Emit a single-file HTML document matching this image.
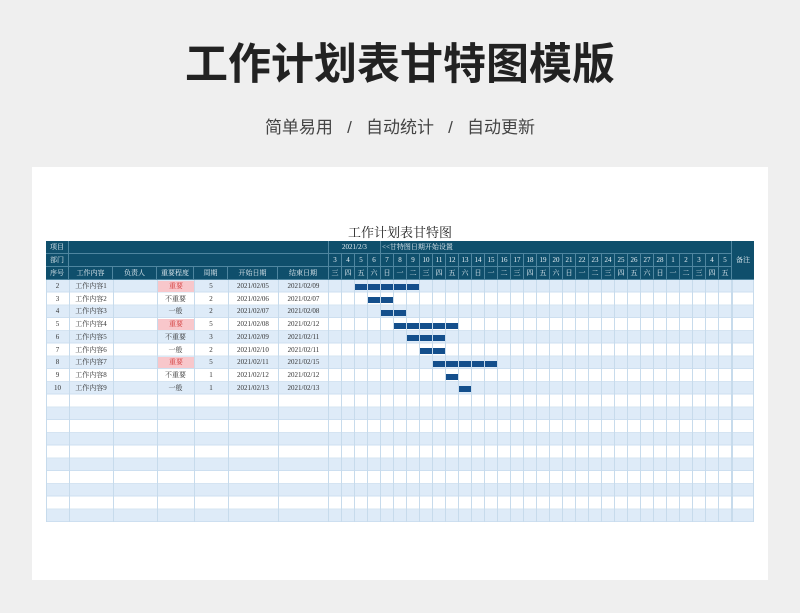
<!DOCTYPE html>
<html><head><meta charset="utf-8">
<style>
*{margin:0;padding:0;box-sizing:border-box}
body{width:800px;height:613px;background:#efefef;position:relative;overflow:hidden;font-family:"Liberation Serif","Noto Serif CJK SC",serif}
.h1{position:absolute;top:30px;left:0;width:800px;text-align:center;font:bold 43px "Liberation Sans","Noto Sans CJK SC",sans-serif;color:#222;letter-spacing:0}
.sub{position:absolute;top:113px;left:0;width:800px;text-align:center;font:17px "Liberation Sans","Noto Sans CJK SC",sans-serif;color:#444}
.card{position:absolute;left:32px;top:167px;width:736px;height:413px;background:#fff}
.t{position:absolute;top:222px;left:0;width:800px;text-align:center;font-size:13px;color:#222}
.a{position:absolute}
.hd{position:absolute;left:46px;top:241px;width:708px;height:39px;background:#0f4f6c}
.c{position:absolute;font-size:7px;text-align:center;line-height:13px;white-space:nowrap;overflow:hidden}
.hc{color:#e8f0f5;border-right:1px solid #4f86a0;border-bottom:1px solid #4f86a0}
.body{position:absolute;left:46px;top:280px;width:708px;height:242px;background:repeating-linear-gradient(to bottom,#deebf8 0,#deebf8 11.7px,#cddff0 11.7px,#cddff0 12.74px,#fff 12.74px,#fff 24.5px,#d5e4f2 24.5px,#d5e4f2 25.48px)}
.vl{position:absolute;top:280px;height:242px;width:1px;background:#c7dbec}
.gv{position:absolute;left:329px;top:280px;width:403px;height:242px;background:repeating-linear-gradient(to right,transparent 0,transparent 12px,#c7dbec 12px,#c7dbec 13px);z-index:3}
.bar{position:absolute;height:6px;background:#144f8c;z-index:2}
.r{position:absolute;left:46px;height:12.74px;font-size:7px;color:#333;z-index:4}
.r span{position:absolute;top:0;line-height:12.74px;text-align:center}
.pk{background:#f8c7cb;color:#d23a3a}
</style></head><body>
<div class="h1">工作计划表甘特图模版</div>
<div class="sub">简单易用 &nbsp;&nbsp;/&nbsp;&nbsp; 自动统计 &nbsp;&nbsp;/&nbsp;&nbsp; 自动更新</div>
<div class="card"></div>
<div class="t">工作计划表甘特图</div>
<div class="hd"></div>
<!-- header row 1 & 2 -->
<div class="c hc" style="left:46px;top:241px;width:23px;height:13px">项目</div>
<div class="c hc" style="left:69px;top:241px;width:260px;height:13px"></div>
<div class="c hc" style="left:329px;top:241px;width:52px;height:13px">2021/2/3</div>
<div class="c hc" style="left:381px;top:241px;width:351px;height:13px;text-align:left;padding-left:1px">&lt;&lt;甘特图日期开始设置</div>
<div class="c hc" style="left:732px;top:241px;width:22px;height:39px;line-height:39px;border-right:none">备注</div>
<div class="c hc" style="left:46px;top:254px;width:23px;height:13px">部门</div>
<div class="c hc" style="left:69px;top:254px;width:260px;height:13px"></div>
<div class="c hc" style="left:46px;top:267px;width:23px;height:13px">序号</div>
<div class="c hc" style="left:69px;top:267px;width:44px;height:13px">工作内容</div>
<div class="c hc" style="left:113px;top:267px;width:44px;height:13px">负责人</div>
<div class="c hc" style="left:157px;top:267px;width:37px;height:13px">重要程度</div>
<div class="c hc" style="left:194px;top:267px;width:34px;height:13px">周期</div>
<div class="c hc" style="left:228px;top:267px;width:50px;height:13px">开始日期</div>
<div class="c hc" style="left:278px;top:267px;width:51px;height:13px">结束日期</div>
<div class="a" style="left:329px;top:254px;width:403px;height:13px;display:flex">
<div class="c hc" style="position:relative;width:13px;flex:none">3</div><div class="c hc" style="position:relative;width:13px;flex:none">4</div><div class="c hc" style="position:relative;width:13px;flex:none">5</div><div class="c hc" style="position:relative;width:13px;flex:none">6</div><div class="c hc" style="position:relative;width:13px;flex:none">7</div><div class="c hc" style="position:relative;width:13px;flex:none">8</div><div class="c hc" style="position:relative;width:13px;flex:none">9</div><div class="c hc" style="position:relative;width:13px;flex:none">10</div><div class="c hc" style="position:relative;width:13px;flex:none">11</div><div class="c hc" style="position:relative;width:13px;flex:none">12</div><div class="c hc" style="position:relative;width:13px;flex:none">13</div><div class="c hc" style="position:relative;width:13px;flex:none">14</div><div class="c hc" style="position:relative;width:13px;flex:none">15</div><div class="c hc" style="position:relative;width:13px;flex:none">16</div><div class="c hc" style="position:relative;width:13px;flex:none">17</div><div class="c hc" style="position:relative;width:13px;flex:none">18</div><div class="c hc" style="position:relative;width:13px;flex:none">19</div><div class="c hc" style="position:relative;width:13px;flex:none">20</div><div class="c hc" style="position:relative;width:13px;flex:none">21</div><div class="c hc" style="position:relative;width:13px;flex:none">22</div><div class="c hc" style="position:relative;width:13px;flex:none">23</div><div class="c hc" style="position:relative;width:13px;flex:none">24</div><div class="c hc" style="position:relative;width:13px;flex:none">25</div><div class="c hc" style="position:relative;width:13px;flex:none">26</div><div class="c hc" style="position:relative;width:13px;flex:none">27</div><div class="c hc" style="position:relative;width:13px;flex:none">28</div><div class="c hc" style="position:relative;width:13px;flex:none">1</div><div class="c hc" style="position:relative;width:13px;flex:none">2</div><div class="c hc" style="position:relative;width:13px;flex:none">3</div><div class="c hc" style="position:relative;width:13px;flex:none">4</div><div class="c hc" style="position:relative;width:13px;flex:none">5</div>
</div>
<div class="a" style="left:329px;top:267px;width:403px;height:13px;display:flex">
<div class="c hc" style="position:relative;width:13px;flex:none">三</div><div class="c hc" style="position:relative;width:13px;flex:none">四</div><div class="c hc" style="position:relative;width:13px;flex:none">五</div><div class="c hc" style="position:relative;width:13px;flex:none">六</div><div class="c hc" style="position:relative;width:13px;flex:none">日</div><div class="c hc" style="position:relative;width:13px;flex:none">一</div><div class="c hc" style="position:relative;width:13px;flex:none">二</div><div class="c hc" style="position:relative;width:13px;flex:none">三</div><div class="c hc" style="position:relative;width:13px;flex:none">四</div><div class="c hc" style="position:relative;width:13px;flex:none">五</div><div class="c hc" style="position:relative;width:13px;flex:none">六</div><div class="c hc" style="position:relative;width:13px;flex:none">日</div><div class="c hc" style="position:relative;width:13px;flex:none">一</div><div class="c hc" style="position:relative;width:13px;flex:none">二</div><div class="c hc" style="position:relative;width:13px;flex:none">三</div><div class="c hc" style="position:relative;width:13px;flex:none">四</div><div class="c hc" style="position:relative;width:13px;flex:none">五</div><div class="c hc" style="position:relative;width:13px;flex:none">六</div><div class="c hc" style="position:relative;width:13px;flex:none">日</div><div class="c hc" style="position:relative;width:13px;flex:none">一</div><div class="c hc" style="position:relative;width:13px;flex:none">二</div><div class="c hc" style="position:relative;width:13px;flex:none">三</div><div class="c hc" style="position:relative;width:13px;flex:none">四</div><div class="c hc" style="position:relative;width:13px;flex:none">五</div><div class="c hc" style="position:relative;width:13px;flex:none">六</div><div class="c hc" style="position:relative;width:13px;flex:none">日</div><div class="c hc" style="position:relative;width:13px;flex:none">一</div><div class="c hc" style="position:relative;width:13px;flex:none">二</div><div class="c hc" style="position:relative;width:13px;flex:none">三</div><div class="c hc" style="position:relative;width:13px;flex:none">四</div><div class="c hc" style="position:relative;width:13px;flex:none">五</div>
</div>
<!-- body -->
<div class="body"></div>
<div class="vl" style="left:46px"></div><div class="vl" style="left:69px"></div><div class="vl" style="left:113px"></div><div class="vl" style="left:157px"></div><div class="vl" style="left:194px"></div><div class="vl" style="left:228px"></div><div class="vl" style="left:278px"></div><div class="vl" style="left:328px"></div><div class="vl" style="left:732px"></div><div class="vl" style="left:753px"></div>
<div class="gv"></div>
<div class="bar" style="left:355px;width:65px;top:284.4px"></div>
<div class="bar" style="left:368px;width:26px;top:297.1px"></div>
<div class="bar" style="left:381px;width:26px;top:309.9px"></div>
<div class="bar" style="left:394px;width:65px;top:322.6px"></div>
<div class="bar" style="left:407px;width:39px;top:335.4px"></div>
<div class="bar" style="left:420px;width:26px;top:348.1px"></div>
<div class="bar" style="left:433px;width:65px;top:360.8px"></div>
<div class="bar" style="left:446px;width:13px;top:373.6px"></div>
<div class="bar" style="left:459px;width:13px;top:386.3px"></div>

<div class="r" style="top:280px"><span style="left:0;width:23px">2</span><span style="left:23px;width:44px">工作内容1</span><span class="pk" style="left:112px;width:36px;top:1px;line-height:10.7px">重要</span><span style="left:148px;width:34px">5</span><span style="left:182px;width:50px">2021/02/05</span><span style="left:232px;width:51px">2021/02/09</span></div>
<div class="r" style="top:292.74px"><span style="left:0;width:23px">3</span><span style="left:23px;width:44px">工作内容2</span><span style="left:111px;width:37px">不重要</span><span style="left:148px;width:34px">2</span><span style="left:182px;width:50px">2021/02/06</span><span style="left:232px;width:51px">2021/02/07</span></div>
<div class="r" style="top:305.48px"><span style="left:0;width:23px">4</span><span style="left:23px;width:44px">工作内容3</span><span style="left:111px;width:37px">一般</span><span style="left:148px;width:34px">2</span><span style="left:182px;width:50px">2021/02/07</span><span style="left:232px;width:51px">2021/02/08</span></div>
<div class="r" style="top:318.22px"><span style="left:0;width:23px">5</span><span style="left:23px;width:44px">工作内容4</span><span class="pk" style="left:112px;width:36px;top:1px;line-height:10.7px">重要</span><span style="left:148px;width:34px">5</span><span style="left:182px;width:50px">2021/02/08</span><span style="left:232px;width:51px">2021/02/12</span></div>
<div class="r" style="top:330.96px"><span style="left:0;width:23px">6</span><span style="left:23px;width:44px">工作内容5</span><span style="left:111px;width:37px">不重要</span><span style="left:148px;width:34px">3</span><span style="left:182px;width:50px">2021/02/09</span><span style="left:232px;width:51px">2021/02/11</span></div>
<div class="r" style="top:343.7px"><span style="left:0;width:23px">7</span><span style="left:23px;width:44px">工作内容6</span><span style="left:111px;width:37px">一般</span><span style="left:148px;width:34px">2</span><span style="left:182px;width:50px">2021/02/10</span><span style="left:232px;width:51px">2021/02/11</span></div>
<div class="r" style="top:356.44px"><span style="left:0;width:23px">8</span><span style="left:23px;width:44px">工作内容7</span><span class="pk" style="left:112px;width:36px;top:1px;line-height:10.7px">重要</span><span style="left:148px;width:34px">5</span><span style="left:182px;width:50px">2021/02/11</span><span style="left:232px;width:51px">2021/02/15</span></div>
<div class="r" style="top:369.18px"><span style="left:0;width:23px">9</span><span style="left:23px;width:44px">工作内容8</span><span style="left:111px;width:37px">不重要</span><span style="left:148px;width:34px">1</span><span style="left:182px;width:50px">2021/02/12</span><span style="left:232px;width:51px">2021/02/12</span></div>
<div class="r" style="top:381.92px"><span style="left:0;width:23px">10</span><span style="left:23px;width:44px">工作内容9</span><span style="left:111px;width:37px">一般</span><span style="left:148px;width:34px">1</span><span style="left:182px;width:50px">2021/02/13</span><span style="left:232px;width:51px">2021/02/13</span></div>
</body></html>
